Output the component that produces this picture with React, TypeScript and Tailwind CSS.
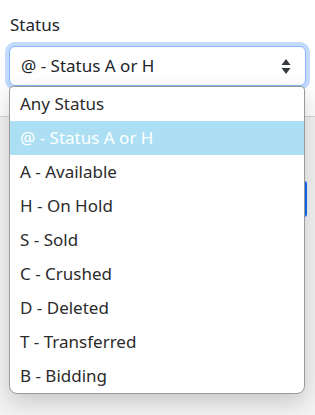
import React from "react";

const items = [
  "Any Status",
  "@ - Status A or H",
  "A - Available",
  "H - On Hold",
  "S - Sold",
  "C - Crushed",
  "D - Deleted",
  "T - Transferred",
  "B - Bidding",
];

export default function App() {
  return (
    <div
      className="relative w-[315px] h-[415px] overflow-hidden bg-white text-[#212529]"
      style={{ fontFamily: '"Noto Sans", "Open Sans", sans-serif' }}
    >
      <div className="px-[10px] pt-[12px]">
        <div className="text-[17px] leading-[26px] h-[34px]">Status</div>
        <div className="ml-[-1px] mr-[-1px] h-[40px] rounded-[6px] border border-[#86b7fe] shadow-[0_0_0_4px_rgba(13,110,253,0.25)] bg-white flex items-center pl-[11px] pr-[14px] text-[17px] text-[#212529]">
          <span className="flex-1">@ - Status A or H</span>
          <svg width="10" height="17" viewBox="0 0 10 17" className="text-[#343a40]">
            <path d="M5 1 L9.5 7 L0.5 7 Z" fill="currentColor" />
            <path d="M0.5 10 L9.5 10 L5 16 Z" fill="currentColor" />
          </svg>
        </div>
      </div>
      <div className="h-[30px]" />
      <div className="border-t border-[#d6d6d6] h-[300px] bg-[#f3f3f3]">
        <div className="ml-auto mr-[8px] mt-[64px] w-[8px] h-[36px] rounded-[3px] bg-[#0d6efd]" />
      </div>
      <div className="absolute left-[9px] top-[86px] w-[296px] rounded-t-[4px] rounded-b-[8px] border border-[#9a9a9a] bg-white overflow-hidden shadow-[0_8px_22px_rgba(0,0,0,0.18)]">
        {items.map((t, i) => (
          <div
            key={t}
            className={
              "h-[34px] flex items-center pl-[10px] text-[17px] " +
              (i === 1 ? "bg-[#acdff4] text-white" : "text-[#2b2b2b]")
            }
          >
            {t}
          </div>
        ))}
      </div>
    </div>
  );
}
